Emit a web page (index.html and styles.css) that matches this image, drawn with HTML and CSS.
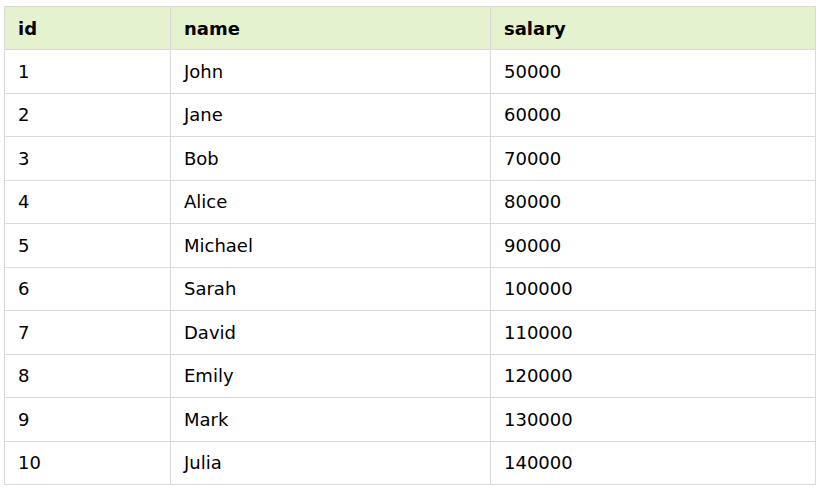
FILE: index.html
```html
<!DOCTYPE html>
<html>
<head>
<meta charset="utf-8">
<link rel="stylesheet" href="styles.css">
</head>
<body>
<table class="data">
  <colgroup>
    <col class="c-id">
    <col class="c-name">
    <col class="c-salary">
  </colgroup>
  <thead>
    <tr><th>id</th><th>name</th><th>salary</th></tr>
  </thead>
  <tbody>
    <tr><td>1</td><td>John</td><td>50000</td></tr>
    <tr><td>2</td><td>Jane</td><td>60000</td></tr>
    <tr><td>3</td><td>Bob</td><td>70000</td></tr>
    <tr><td>4</td><td>Alice</td><td>80000</td></tr>
    <tr><td>5</td><td>Michael</td><td>90000</td></tr>
    <tr><td>6</td><td>Sarah</td><td>100000</td></tr>
    <tr><td>7</td><td>David</td><td>110000</td></tr>
    <tr><td>8</td><td>Emily</td><td>120000</td></tr>
    <tr><td>9</td><td>Mark</td><td>130000</td></tr>
    <tr><td>10</td><td>Julia</td><td>140000</td></tr>
  </tbody>
</table>
</body>
</html>
```
FILE: styles.css
```css
html, body {
  margin: 0;
  padding: 0;
  background: #ffffff;
}
body {
  padding: 6px 0 0 4px;
  font-family: "DejaVu Sans", Verdana, sans-serif;
  font-size: 18px;
  color: #000;
}
.data {
  border-collapse: collapse;
  table-layout: fixed;
  width: 811px;
}
.c-id { width: 166px; }
.c-name { width: 320px; }
.c-salary { width: 325px; }
.data th, .data td {
  border: 1px solid #d9d9d9;
  padding: 0 13px;
  text-align: left;
  vertical-align: middle;
}
.data th {
  height: 42px;
  background: #e4f2d0;
  font-weight: bold;
}
.data td {
  height: 42.5px;
}
```
